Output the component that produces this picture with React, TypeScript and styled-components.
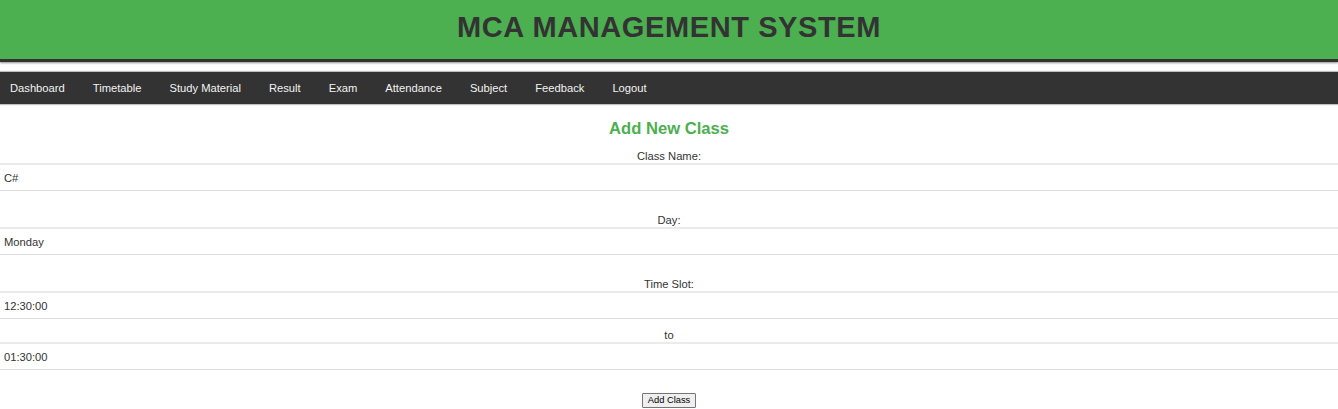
import React from "react";
import styled, { createGlobalStyle } from "styled-components";

const GlobalStyle = createGlobalStyle`
  body {
    margin: 0;
    background: #fff;
    font-family: "Liberation Sans", Arial, sans-serif;
    color: #333;
  }
`;

const Header = styled.header`
  background-color: #4caf50;
  height: 62px;
  box-sizing: border-box;
  padding-top: 11px;
  border-bottom: 3px solid #333;
  box-shadow: 0 1px 2px rgba(0, 0, 0, 0.45);
  text-align: center;
`;

const HeaderTitle = styled.h1`
  margin: 0;
  font-size: 29px;
  line-height: 33px;
  font-weight: bold;
  letter-spacing: 0.6px;
  color: #333;
`;

const Nav = styled.nav`
  margin-top: 10px;
  height: 32px;
  background-color: #333;
  box-shadow: 0 0 1px 1px rgba(0, 0, 0, 0.25);
`;

const NavList = styled.ul`
  list-style: none;
  display: flex;
  align-items: center;
  gap: 8px;
  height: 100%;
  margin: 0;
  padding: 0;
`;

const NavLink = styled.a`
  display: block;
  padding: 0 10px;
  color: #f2f2f2;
  font-size: 11.2px;
  line-height: 32px;
  text-decoration: none;
  cursor: pointer;
`;

const Title = styled.h2`
  margin: 15px 0 12px;
  font-size: 16.6px;
  line-height: 19px;
  color: #4caf50;
  text-align: center;
`;

const Form = styled.form`
  display: flex;
  flex-direction: column;
`;

const Label = styled.label<{ $gap?: boolean }>`
  display: block;
  margin-top: ${(p) => (p.$gap ? "13px" : "0")};
  font-size: 11.2px;
  line-height: 13px;
  text-align: center;
  color: #333;
`;

const Input = styled.input`
  display: block;
  width: 100%;
  height: 28px;
  box-sizing: border-box;
  margin: 0 0 10px;
  padding: 0 4px;
  border-style: solid;
  border-color: #ddd;
  border-width: 2px 0 1px;
  border-top-color: #ebebeb;
  font-family: "Liberation Sans", Arial, sans-serif;
  font-size: 11.2px;
  color: #333;
  background: #fff;
  outline: none;
`;

const ButtonRow = styled.div`
  display: flex;
  justify-content: center;
  margin-top: 13px;
`;

const SubmitButton = styled.button`
  height: 15px;
  padding: 0 5px;
  border: 1px solid #767676;
  border-radius: 1px;
  background: #efefef;
  font-family: "Liberation Sans", Arial, sans-serif;
  font-size: 9.3px;
  line-height: 13px;
  color: #000;
  cursor: pointer;
`;

const links = [
  "Dashboard",
  "Timetable",
  "Study Material",
  "Result",
  "Exam",
  "Attendance",
  "Subject",
  "Feedback",
  "Logout",
];

const fields = [
  { id: "class_name", label: "Class Name:", value: "C#", gap: false },
  { id: "day", label: "Day:", value: "Monday", gap: true },
  { id: "start_time", label: "Time Slot:", value: "12:30:00", gap: true },
  { id: "end_time", label: "to", value: "01:30:00", gap: false },
];

const App = () => {
  return (
    <>
      <GlobalStyle />
      <Header>
        <HeaderTitle>MCA MANAGEMENT SYSTEM</HeaderTitle>
      </Header>
      <Nav>
        <NavList>
          {links.map((link) => (
            <li key={link}>
              <NavLink>{link}</NavLink>
            </li>
          ))}
        </NavList>
      </Nav>
      <Title>Add New Class</Title>
      <Form onSubmit={(e) => e.preventDefault()}>
        {fields.map((field) => (
          <React.Fragment key={field.id}>
            <Label htmlFor={field.id} $gap={field.gap}>
              {field.label}
            </Label>
            <Input id={field.id} type="text" defaultValue={field.value} />
          </React.Fragment>
        ))}
        <ButtonRow>
          <SubmitButton type="submit">Add Class</SubmitButton>
        </ButtonRow>
      </Form>
    </>
  );
};

export default App;
